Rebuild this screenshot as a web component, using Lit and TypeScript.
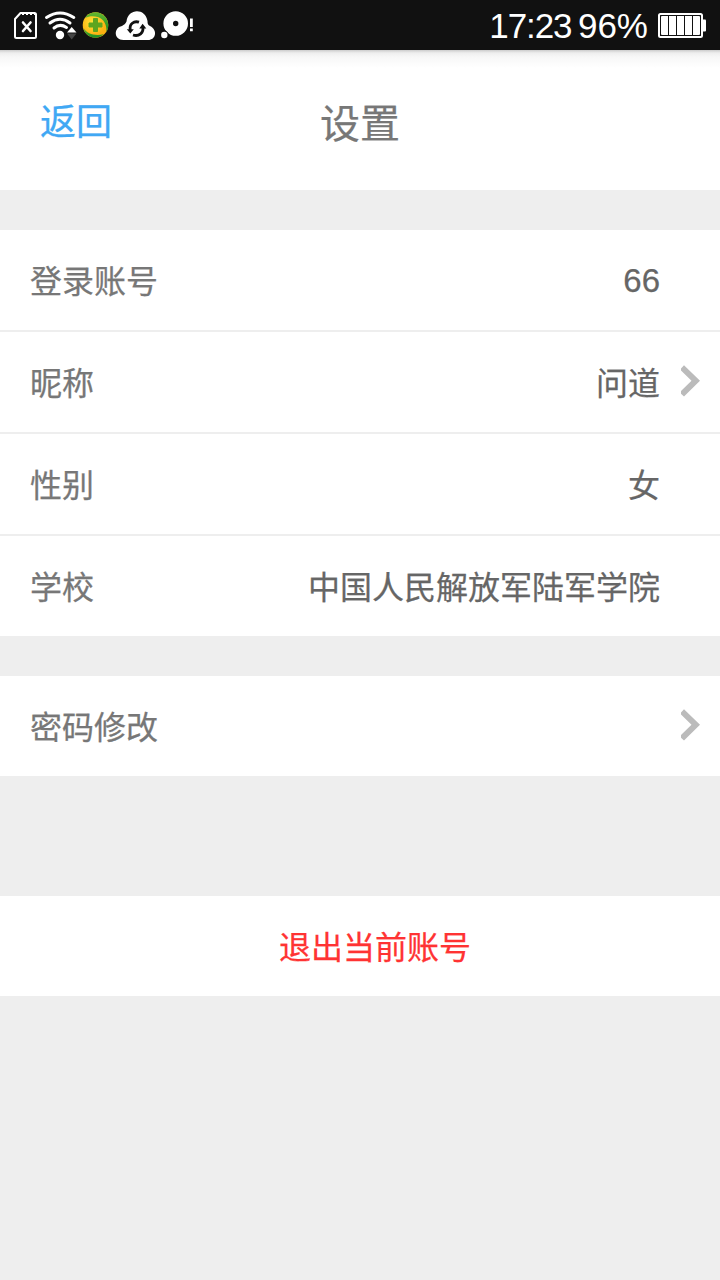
import { LitElement, html, css, nothing } from "lit";
import { customElement, property } from "lit/decorators.js";

@customElement("status-bar")
class StatusBar extends LitElement {
  static styles = css`
    :host { display: block; }
    .bar {
      display: flex; align-items: center; justify-content: space-between;
      height: 50px; background: #111; color: #fff;
      font: 35px/50px "Liberation Sans", Arial, sans-serif;
    }
    .icons, .info { display: flex; align-items: center; }
    svg { display: block; height: 50px; flex: none; }
    .time { margin-right: 6.5px; letter-spacing: -1.1px; padding-top: 2px; }
    .percent { margin-right: 8px; padding-top: 2px; }
  `;
  render() {
    return html`
      <div class="bar">
        <div class="icons">
          <svg width="40" viewBox="0 0 40 50" fill="none" stroke="#fff">
            <path d="M20.500 13H34.500Q36 13 36 14.500V36.500Q36 38 34.500 38H16.500Q15 38 15 36.500V19Z" stroke-width="2" stroke-linejoin="round" />
            <path d="M22 13.500h13" stroke-width="3" stroke-dasharray="2 2" />
            <path d="M23 22.500l7.500 8.500M30.500 22.500l-7.500 8.500" stroke-width="2.600" stroke-linecap="round" />
          </svg>
          <svg width="41" viewBox="40 0 41 50" fill="none" stroke="#fff" stroke-width="3" stroke-linecap="round">
            <path d="M46.500 17.500Q60 8.500 73.800 17.500" />
            <path d="M50 23Q60 15.500 70 23" />
            <path d="M54 28Q60 23 66.500 27.500" />
            <circle cx="60" cy="35" r="4.200" fill="#fff" stroke="none" />
            <path d="M67 32.500L71.700 27L76.500 32.500Z" fill="#fff" stroke="none" />
            <path d="M67 33.500H76.500L71.700 39.500Z" fill="#444" stroke="none" />
          </svg>
          <svg width="29" viewBox="81 0 29 50">
            <defs>
              <linearGradient id="leaf" x1="0" y1="0" x2="0" y2="1"><stop offset="0" stop-color="#66b72f" /><stop offset="1" stop-color="#168c25" /></linearGradient>
              <radialGradient id="sun" cx=".4" cy=".4"><stop offset="0" stop-color="#ffe83a" /><stop offset="1" stop-color="#fbb011" /></radialGradient>
            </defs>
            <circle cx="95.500" cy="25" r="12.800" fill="url(#sun)" />
            <path d="M85 18C89 11 99 10 105 16.500C109 21 109 28 106.500 32C107 25 104 19 98 17C93 15.500 89 16 85 18Z" fill="url(#leaf)" />
            <path d="M83.500 28C87 34 96 36.500 104 34C99 39 91 38.500 87 34.500Q84 32 83.500 28Z" fill="url(#leaf)" />
            <path d="M93.500 18.500h4v4.500h4.500v4h-4.500v4.500h-4v-4.500h-4.500v-4h4.500Z" fill="#5ea51f" stroke="#5ea51f" stroke-linejoin="round" />
          </svg>
          <svg width="48" viewBox="110 0 48 50">
            <path d="M123.500 40C113.500 40 113.500 27.500 122 26C124 24.500 125.500 24 126.500 21.500C128 8 145.500 8 147.500 21C147.500 24 148 25 150 26C158 30 156 40 148 40Z" fill="#fff" />
            <g fill="none" stroke="#111" stroke-width="2.800">
              <path d="M130.300 30C129 24 134 20.500 139 22.200" />
              <path d="M142.800 27C144 32.500 139 37 133 35" />
            </g>
            <path d="M126.800 29.300h7l-3.500 4.200ZM139.300 28.600h7l-3.700-4.800Z" fill="#111" />
          </svg>
          <svg width="40" viewBox="158 0 40 50" fill="#fff">
            <path fill-rule="evenodd" d="M188 23.500a12.300 12.300 0 1 1-24.600 0a12.300 12.300 0 1 1 24.600 0ZM178.400 23.500a2.700 2.700 0 1 0-5.400 0a2.700 2.700 0 1 0 5.400 0Z" />
            <circle cx="164.300" cy="35" r="4.400" fill="#111" /><circle cx="164.300" cy="35" r="3.200" />
            <path d="M190 18.500h2.800v8.500H190ZM190 28.500h2.800v2.700H190Z" />
          </svg>
        </div>
        <div class="info">
          <span class="time">17:23</span><span class="percent">96%</span>
          <svg width="64" viewBox="656 0 64 50">
            <rect x="659" y="14" width="43" height="23" rx="1.500" fill="none" stroke="#fff" stroke-width="2" />
            <path d="M703 19.500h2q1 0 1 1v10q0 1-1 1h-2Z" fill="#fff" />
            <path d="M662 16h6v19h-6q-1 0-1-1V17q0-1 1-1ZM669 16h7v19h-7ZM677 16h7v19h-7ZM685 16h7v19h-7ZM693 16h6q1 0 1 1v17q0 1-1 1h-6Z" fill="#fff" />
          </svg>
        </div>
      </div>`;
  }
}

@customElement("setting-row")
class SettingRow extends LitElement {
  @property() label = "";
  @property() value = "";
  @property({ type: Boolean }) arrow = false;
  static styles = css`
    :host { display: block; background: #fff; }
    .row {
      display: flex; justify-content: space-between; height: 100px;
      padding: 0 20px 0 30px; font-size: 32px; line-height: 98px; color: #777;
    }
    .end { display: flex; color: #666; }
    .latin { font-family: "Liberation Sans", Arial, sans-serif; font-size: 33px; line-height: 101px; }
    .slot { width: 20px; margin-left: 20px; }
    svg { display: block; height: 100px; }
  `;
  render() {
    const latin = /^[\x00-\x7f]+$/.test(this.value);
    return html`<div class="row">
      <span>${this.label}</span>
      <div class="end">
        <span class=${latin ? "latin" : "value"}>${this.value}</span>
        <div class="slot">${this.arrow
          ? html`<svg width="20" viewBox="0 0 20 100"><path d="M1 36.500L4 33.300L20 48.800L4 64.500L1 61.700V59L11.500 48.800L1 38.500Z" fill="#bbb" /></svg>`
          : nothing}</div>
      </div>
    </div>`;
  }
}

@customElement("app-root")
class AppRoot extends LitElement {
  static styles = css`
    :host {
      display: block; min-height: 1280px; background: #eee;
      font-family: "Noto Sans CJK SC", sans-serif;
      -webkit-text-stroke: 0.25px currentColor;
    }
    status-bar { -webkit-text-stroke: 0; }
    .header {
      display: grid; grid-template-columns: 1fr auto 1fr; height: 140px;
      line-height: 139px; margin-bottom: 40px; padding: 0 40px; box-sizing: border-box;
      background: linear-gradient(#ccc 0, #eee 3px, #f7f7f7 7px, #fff 18px);
    }
    .back { font-size: 36px; color: #40a8f4; }
    .title { font-size: 40px; line-height: 142px; color: #777; }
    .group { display: flex; flex-direction: column; gap: 2px; margin-bottom: 40px; }
    .logout {
      margin-top: 120px; height: 100px; padding-left: 30px; background: #fff; color: #ff3333;
      font-size: 32px; line-height: 98px; text-align: center;
    }
  `;
  render() {
    return html`
      <status-bar></status-bar>
      <div class="header"><span class="back">返回</span><span class="title">设置</span></div>
      <div class="group">
        <setting-row label="登录账号" value="66"></setting-row>
        <setting-row label="昵称" value="问道" arrow></setting-row>
        <setting-row label="性别" value="女"></setting-row>
        <setting-row label="学校" value="中国人民解放军陆军学院"></setting-row>
      </div>
      <setting-row label="密码修改" arrow></setting-row>
      <div class="logout">退出当前账号</div>`;
  }
}
